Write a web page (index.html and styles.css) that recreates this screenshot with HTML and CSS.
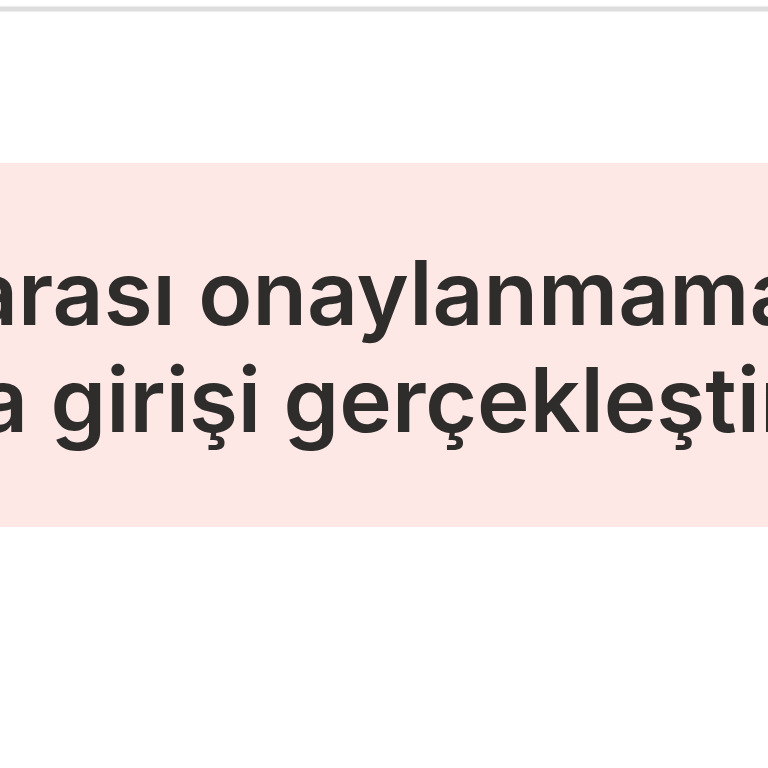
FILE: index.html
```html
<!DOCTYPE html>
<html lang="tr">
<head>
<meta charset="utf-8">
<link rel="stylesheet" href="styles.css">
</head>
<body>
<div class="page">
  <div class="topline"></div>
  <div class="alert">
    <p class="msg">
      <span class="line line-1">arası onaylanmamaktadır</span>
      <span class="line line-2">a girişi gerçekleştirin</span>
    </p>
  </div>
</div>
</body>
</html>
```
FILE: styles.css
```css
html, body {
  margin: 0;
  padding: 0;
  background: #ffffff;
  overflow: hidden;
  width: 768px;
  height: 768px;
}
.page {
  width: 768px;
  height: 768px;
  overflow: hidden;
  padding-top: 7px;
  box-sizing: border-box;
}
.topline {
  height: 4px;
  background: #dddddd;
  box-shadow: 0 -1px 1px #ececec, 0 1px 1px #ececec;
}
.alert {
  margin-top: 152px;
  height: 364px;
  background: #fde8e6;
  box-sizing: border-box;
  padding-top: 76px;
}
.msg {
  margin: 0;
  font-family: Inter, "Noto Sans", sans-serif;
  font-weight: 600;
  font-size: 89px;
  line-height: 107px;
  color: #2f2d2c;
  white-space: nowrap;
}
.line {
  display: block;
}
.line-1 {
  margin-left: -33px;
}
.line-2 {
  margin-left: -23px;
}
```
